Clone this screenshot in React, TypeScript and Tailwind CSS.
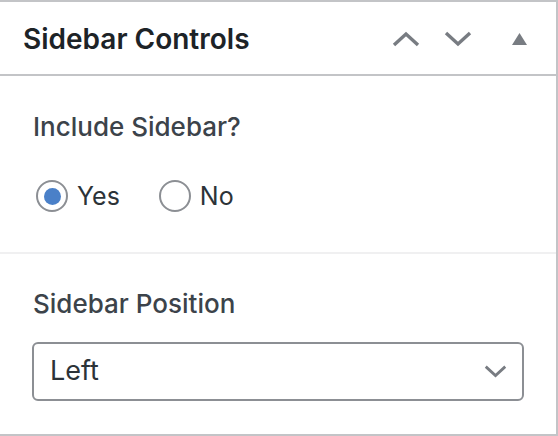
import { useState } from 'react';

function ChevronUp() {
  return (
    <svg width="28" height="16" viewBox="0 0 28 16" fill="none">
      <path d="M2 14 L14 3 L26 14" stroke="#787c82" strokeWidth="3.4" />
    </svg>
  );
}

function ChevronDown({ w = 28, h = 16 }: { w?: number; h?: number }) {
  return (
    <svg width={w} height={h} viewBox="0 0 28 16" fill="none">
      <path d="M2 2 L14 13 L26 2" stroke="#787c82" strokeWidth="3.4" />
    </svg>
  );
}

function Triangle() {
  return (
    <svg width="15" height="12" viewBox="0 0 15 12">
      <path d="M7.5 0 L15 12 L0 12 Z" fill="#787c82" />
    </svg>
  );
}

function Radio({ checked, label, onClick }: { checked: boolean; label: string; onClick: () => void }) {
  return (
    <button onClick={onClick} className="flex items-center gap-[9px]">
      <span className="w-[32px] h-[32px] rounded-full border-2 border-[#8c8f94] flex items-center justify-center bg-white">
        {checked && <span className="w-[17px] h-[17px] rounded-full bg-[#4a80c8]" />}
      </span>
      <span className="text-[25px] leading-[32px] text-[#2c3338]">{label}</span>
    </button>
  );
}

export default function App() {
  const [include, setInclude] = useState(true);

  return (
    <div
      className="w-[558px] h-[436px] bg-white border-t-2 border-r-2 border-b-2 border-[#c3c4c7] flex flex-col"
      style={{ fontFamily: 'Inter, "Noto Sans", sans-serif' }}
    >
      <div className="h-[74px] shrink-0 flex items-center border-b-2 border-[#c3c4c7] pl-[23px]">
        <h2 className="flex-1 text-[28px] font-semibold text-[#1d2327] mt-[2px]">Sidebar Controls</h2>
        <div className="flex items-center mr-[29px] mt-[2px]">
          <ChevronUp />
          <span className="ml-[24px]">
            <ChevronDown />
          </span>
          <span className="ml-[40px]">
            <Triangle />
          </span>
        </div>
      </div>

      <div className="h-[178px] shrink-0 pt-[33px] pl-[33px] border-b-2 border-[#f0f0f1]">
        <p className="text-[26px] leading-[36px] font-medium text-[#3c434a]">Include Sidebar?</p>
        <div className="flex items-center gap-[39px] mt-[35px] pl-[3px]">
          <Radio checked={include} label="Yes" onClick={() => setInclude(true)} />
          <Radio checked={!include} label="No" onClick={() => setInclude(false)} />
        </div>
      </div>

      <div className="pt-[32px] pl-[32px]">
        <p className="pl-px text-[26px] leading-[36px] font-medium text-[#3c434a]">Sidebar Position</p>
        <div className="mt-[20px] h-[59px] w-[492px] border-2 border-[#8c8f94] rounded-[6px] flex items-center justify-between pl-[16px] pr-[15px]">
          <span className="text-[27px] text-[#2c3338]">Left</span>
          <ChevronDown w={23} h={13} />
        </div>
      </div>
    </div>
  );
}
